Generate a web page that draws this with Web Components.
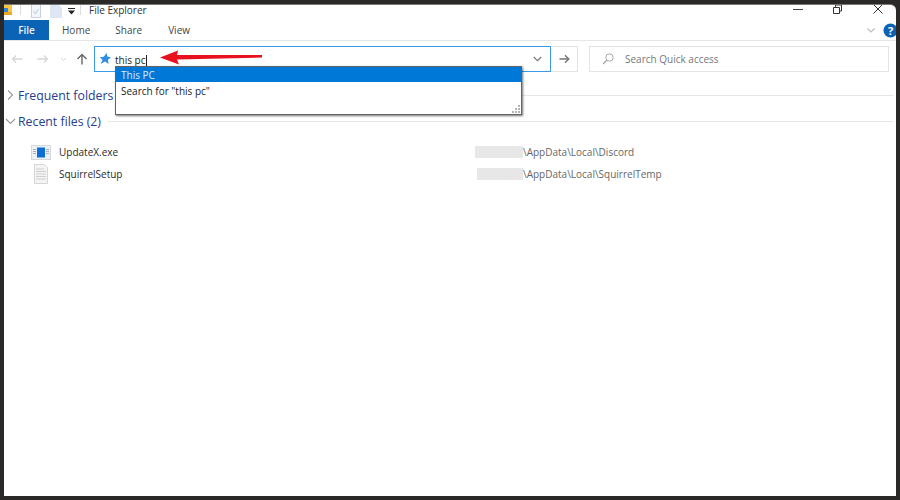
<!DOCTYPE html>
<html><head><meta charset="utf-8"><style>
html,body{margin:0;padding:0;background:#2b2828}
body{width:900px;height:500px;overflow:hidden;font-family:"Open Sans","Noto Sans",sans-serif}
</style></head><body>
<explorer-window>
  <title-bar title-text="File Explorer"></title-bar>
  <ribbon-tabs></ribbon-tabs>
  <address-row></address-row>
  <section-head label="Frequent folders" state="closed" height="26"></section-head>
  <section-head label="Recent files (2)" state="open" height="26"></section-head>
  <file-list>
    <file-row name="UpdateX.exe" kind="exe" path="\AppData\Local\Discord" mask="48" maskx="0"></file-row>
    <file-row name="SquirrelSetup" kind="doc" path="\AppData\Local\SquirrelTemp" mask="46" maskx="2"></file-row>
  </file-list>
  <suggest-menu></suggest-menu>
  <red-arrow></red-arrow>
</explorer-window>
<script>
function def(name, html){
  customElements.define(name, class extends HTMLElement{
    connectedCallback(){
      if(this.shadowRoot) return;
      const r=this.attachShadow({mode:'open'});
      r.innerHTML = typeof html==='function'? html(this): html;
    }
  });
}
def('explorer-window',`<style>
:host{display:flex;flex-direction:column;box-sizing:border-box;position:relative;width:892px;height:492px;margin:4px 0 0 4px;background:#fff;border-top:1px solid #777;border-radius:0 6px 0 0}
</style><slot></slot>`);
def('title-bar',h=>`<style>
:host{display:flex;align-items:flex-start;height:15px;flex:none;font-size:10px;color:#333}
.l{display:flex;align-items:flex-start;height:15px;flex:1}
.sep{width:1px;height:10px;background:#ddd;flex:none}
.t{margin-left:8px;line-height:10px;white-space:nowrap}
svg{display:block;flex:none}
</style>
<div class="l">
<svg width="8" height="10" viewBox="0 0 8 10"><path d="M0 0h8v10H0z" fill="#f6c64a"/><path d="M0 3h4v4H0z" fill="#2f86d8"/><path d="M0 7h8v3H0z" fill="#e8a62c"/></svg>
<div class="sep" style="margin-left:8px"></div>
<svg style="margin-left:10px" width="10" height="13" viewBox="0 0 10 13"><path d="M.5 0v12.500h9V0" fill="#f3f6fa" stroke="#c3d0e0"/><path d="M2.500 6l2 2.500 3-4.500" fill="none" stroke="#c6d2e0" stroke-width="1.100"/></svg>
<svg style="margin-left:9px" width="12" height="13" viewBox="0 0 12 13"><path d="M0 0h9l3 3v10H0z" fill="#dfe6f3"/></svg>
<svg style="margin-left:6px;margin-top:3px" width="7" height="7" viewBox="0 0 7 7"><path d="M0 0h7v1H0zM0 2.500h7L3.500 6.500z" fill="#222"/></svg>
<div class="sep" style="margin-left:5px"></div>
<span class="t">${h.getAttribute('title-text')}</span></div>
<svg width="10" height="15" viewBox="0 0 10 15"><path d="M0 4.500h10" stroke="#444"/></svg>
<svg style="margin-left:30px" width="9" height="15" viewBox="0 0 9 15"><path d="M.5 2.500h6v6h-6zM2.500 2V0h6v6h-2" fill="none" stroke="#333"/></svg>
<svg style="margin-left:31px;margin-right:13px" width="10" height="15" viewBox="0 0 10 15"><path d="M.5 -.5l9 9M9.500 -.5l-9 9" stroke="#333" fill="none"/></svg>`);
def('ribbon-tabs',`<style>
:host{display:flex;align-items:stretch;height:20px;box-sizing:content-box;flex:none;border-bottom:1px solid #e6e6e6;font-size:10px;color:#444}
.f{width:45px;background:#0b63b5;color:#eef3fa;display:flex;align-items:center;justify-content:center;font-weight:600}
.t{display:flex;align-items:center}
.e{margin-left:auto;display:flex;align-items:center;gap:8px}
svg{display:block}
</style>
<div class="f">File</div>
<div class="t" style="margin-left:13px">Home</div>
<div class="t" style="margin-left:25px">Share</div>
<div class="t" style="margin-left:26px">View</div>
<div class="e">
<svg width="8" height="5" viewBox="0 0 8 5"><path d="M.5.500L4 4 7.500.5" fill="none" stroke="#bbb" stroke-width="1.100"/></svg>
<svg width="13" height="15" viewBox="0 0 13 15"><circle cx="7.500" cy="7.500" r="7" fill="#0b63b5"/><text x="7.500" y="11.500" font-size="11" font-weight="700" text-anchor="middle" fill="#fff" font-family="Open Sans">?</text></svg>
</div>`);
def('address-row',`<style>
:host{display:flex;align-items:center;height:26px;flex:none;padding:5px 0 10px 7px}
svg{display:block;flex:none}
.box{width:457px;height:26px;box-sizing:border-box;border:1px solid #3b9be8;display:flex;align-items:center;font-size:10px;color:#222}
.go{width:27px;height:26px;box-sizing:border-box;border:1px solid #e3e3e3;border-left:0;display:flex;align-items:center;justify-content:center;flex:none}
.s{width:300px;height:26px;box-sizing:border-box;margin-left:11px;border:1px solid #e3e3e3;display:flex;align-items:center;font-size:10px;color:#777;flex:none}
.caret{display:inline-block;width:1px;height:12px;background:#222;vertical-align:-3px}
.txt{flex:1;margin:1px 0 0 4px}
</style>
<svg width="12" height="10" viewBox="0 0 12 10"><path d="M11.500 5H1.500M5 1.500L1.500 5 5 8.500" fill="none" stroke="#d6d6d6" stroke-width="1.300"/></svg>
<svg style="margin-left:14px" width="12" height="10" viewBox="0 0 12 10"><path d="M.5 5h10M7 1.500L10.500 5 7 8.500" fill="none" stroke="#d6d6d6" stroke-width="1.300"/></svg>
<svg style="margin-left:11px" width="7" height="5" viewBox="0 0 7 5"><path d="M1 1l2.500 2.500L6 1" fill="none" stroke="#d6d6d6"/></svg>
<svg style="margin-left:9px" width="12" height="12" viewBox="0 0 12 12"><path d="M6 11.500V1.500M1.500 6L6 1.500 10.500 6" fill="none" stroke="#666" stroke-width="1.400"/></svg>
<div class="box" style="margin-left:6px;flex:none">
<svg style="margin-left:4px" width="12" height="12" viewBox="0 0 12 12"><path d="M7.500 0l1 3.500L12 4.500 9 6.800l.5 4.200-3.400-2.600L1.500 11 3.500 6.900.8 4l4-.3z" fill="#2f8fe0"/></svg>
<span class="txt">this pc<span class="caret"></span></span>
<svg style="margin-right:8px" width="9" height="6" viewBox="0 0 9 6"><path d="M.8 1l3.700 3.700L8.200 1" fill="none" stroke="#777" stroke-width="1.200"/></svg>
</div>
<div class="go"><svg width="11" height="10" viewBox="0 0 11 10"><path d="M.5 5h9M6 1.200L9.800 5 6 8.800" fill="none" stroke="#777" stroke-width="1.400"/></svg></div>
<div class="s"><svg style="margin-left:12px" width="12" height="12" viewBox="0 0 12 12"><circle cx="7.500" cy="4.500" r="3.700" fill="none" stroke="#a8a8a8"/><path d="M4.800 7.200L1 11" stroke="#a8a8a8" stroke-width="1.300"/></svg><span style="margin-left:11px;margin-top:-1px">Search Quick access</span></div>`);
def('section-head',h=>`<style>
:host{display:flex;align-items:center;height:${h.getAttribute('height')}px;flex:none;padding-right:3px;font-size:12.3px;color:#26408f}
svg{display:block;flex:none;margin-left:1px;width:11px}
span{margin-left:2px;white-space:nowrap}
i{flex:1;height:1px;background:#e6e6e6;margin-left:7px}
</style>
${h.getAttribute('state')==='open'
 ?'<svg height="10" viewBox="0 0 11 10"><path d="M1 3l4.500 4.500L10 3" fill="none" stroke="#999" stroke-width="1.100"/></svg>'
 :'<svg height="10" viewBox="0 0 11 10"><path d="M3 .5L7.500 5 3 9.500" fill="none" stroke="#999" stroke-width="1.100"/></svg>'}
<span>${h.getAttribute('label')}</span><i></i>`);
def('file-list',`<style>:host{display:flex;flex-direction:column;padding:7px 0 0 27px}</style><slot></slot>`);
const ICON={exe:`<svg width="20" height="15" viewBox="0 0 20 15"><path d="M0 0h20v15H0z" fill="#d4d9de"/><path d="M1 1h18v13H1z" fill="#eef1f4"/><path d="M6 2.500h8v10H6z" fill="#0b6fd6"/><path d="M2 4h3v1H2zM2 6h3v1H2zM15 4h3v1h-3zM15 6h3v1h-3zM2 8h3v1H2zM15 8h3v1h-3z" fill="#a8b0b8"/></svg>`,
doc:`<svg width="20" height="20" viewBox="0 0 20 20"><path d="M3.500.5h10l3 3v16h-13z" fill="#f4f4f4" stroke="#d6d6d6"/><path d="M5 5h8M5 7.500h10M5 10h10M5 12.500h10M5 15h10" stroke="#cfcfcf"/></svg>`};
def('file-row',h=>`<style>
:host{display:grid;grid-template-columns:28px 416px 1fr;align-items:center;height:22px;font-size:10px;color:#2a2a2a}
.i{display:flex;align-items:center}
svg{display:block}
.p{display:flex;align-items:center;color:#666}
.m{display:block;height:12px;width:${h.getAttribute('mask')}px;margin-left:${h.getAttribute('maskx')}px;background:#e7e7e7}
</style>
<div class="i">${ICON[h.getAttribute('kind')]}</div><div class="n">${h.getAttribute('name')}</div>
<div class="p"><span class="m"></span><span>${h.getAttribute('path')}</span></div>`);
def('suggest-menu',`<style>
:host{display:flex;flex-direction:column;position:absolute;left:111px;top:61px;width:407px;height:49px;box-sizing:border-box;background:#fff;border:1px solid #646464;box-shadow:1px 1px 2px rgba(0,0,0,.55);font-size:10px;color:#222}
.a{background:#0078d7;color:#dcebf8;height:15px;box-sizing:border-box;padding:1px 0 0 5px;line-height:14px;flex:none}
.b{padding:1px 0 0 5px;line-height:16px}
.g{position:absolute;right:1px;bottom:1px}
</style><div class="a">This PC</div><div class="b">Search for "this pc"</div>
<svg class="g" width="8" height="8" viewBox="0 0 8 8"><path d="M6 0h2v2H6zM3 3h2v2H3zM6 3h2v2H6zM0 6h2v2H0zM3 6h2v2H3zM6 6h2v2H6z" fill="#b5b5b5"/></svg>`);
def('red-arrow',`<style>:host{display:block;position:absolute;left:155px;top:45px;width:106px;height:16px}svg{display:block}</style>
<svg width="106" height="16" viewBox="0 0 106 16"><path d="M1 7.500L19 .5 18 5 103 5V7.500L18 9.500 20 14.500z" fill="#e8101c"/></svg>`);
</script>
</body></html>
